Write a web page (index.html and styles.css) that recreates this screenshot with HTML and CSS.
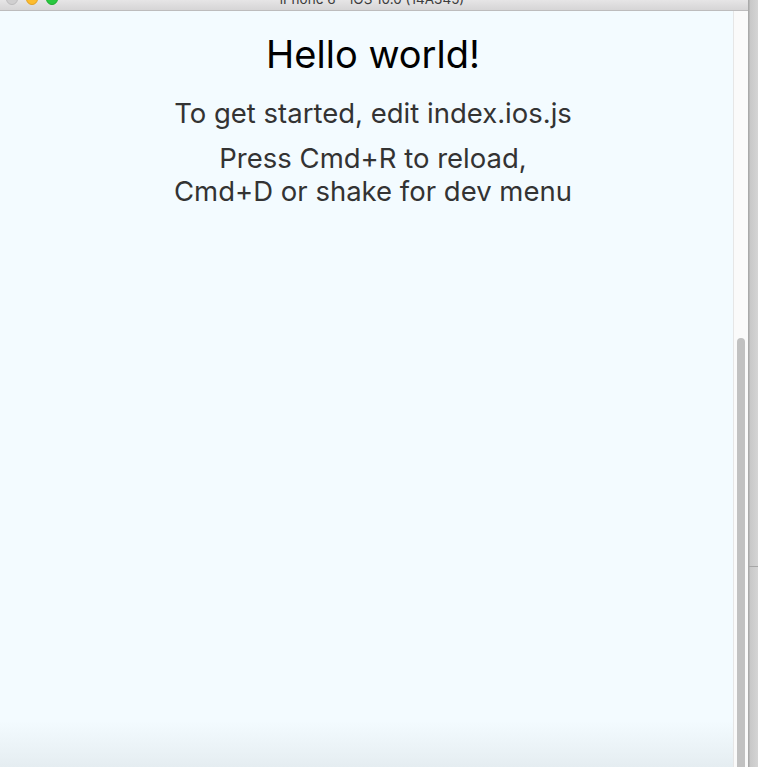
FILE: index.html
```html
<!DOCTYPE html>
<html>
<head>
<meta charset="utf-8">
<link rel="stylesheet" href="styles.css">
</head>
<body>
<div class="desk">
  <div class="window">
    <div class="titlebar">
      <div class="titlerow">
        <div class="lights">
          <span class="light gray"></span>
          <span class="light yellow"></span>
          <span class="light green"></span>
        </div>
        <div class="title">iPhone 6 – iOS 10.0 (14A345)</div>
      </div>
    </div>
    <div class="body">
      <div class="screen">
        <h1 class="welcome">Hello world!</h1>
        <p class="instructions first">To get started, edit index.ios.js</p>
        <p class="instructions">Press Cmd+R to reload,<br>Cmd+D or shake for dev menu</p>
      </div>
      <div class="scrollbar"><div class="thumb"></div></div>
    </div>
  </div>
  <div class="strip"><div class="stripline"></div></div>
</div>
</body>
</html>
```
FILE: styles.css
```css
html, body {
  margin: 0;
  padding: 0;
  width: 758px;
  height: 767px;
  overflow: hidden;
}
.desk {
  display: flex;
  width: 758px;
  height: 767px;
  font-family: Inter, "Liberation Sans", sans-serif;
}
.window {
  width: 748px;
  height: 767px;
  display: flex;
  flex-direction: column;
}
.titlebar {
  height: 10px;
  flex: none;
  overflow: hidden;
  background: linear-gradient(#e6e5e6, #d6d5d6);
  border-bottom: 1px solid #bdbcbd;
}
.titlerow {
  height: 22px;
  margin-top: -12px;
  display: flex;
  align-items: center;
  position: relative;
}
.lights {
  display: flex;
  gap: 8px;
  padding-left: 6px;
}
.light {
  width: 12px;
  height: 12px;
  border-radius: 50%;
  box-sizing: border-box;
}
.gray { background: #d0cfd0; border: 1px solid #bdbcbd; }
.yellow { background: #fdbc2e; border: 1px solid #e0a125; }
.green { background: #28c840; border: 1px solid #1eab2e; }
.title {
  position: absolute;
  left: 0;
  right: 0;
  top: 3px;
  text-align: center;
  font-size: 13.5px;
  line-height: 16px;
  color: #3c3c3c;
  padding-right: 4px;
}
.body {
  flex: 1;
  position: relative;
  background: linear-gradient(#f3fbff 0, #f3fbff 710px, #e5edf1 756px);
  overflow: hidden;
}
.screen {
  width: 746px;
  text-align: center;
  padding-top: 20px;
}
.welcome {
  margin: 0;
  font-weight: 400;
  font-size: 38px;
  line-height: 46px;
  color: #000;
}
.instructions {
  margin: 12px 0 0;
  font-size: 27.5px;
  line-height: 33px;
  color: #333;
}
.instructions.first {
  margin-top: 20px;
}
.scrollbar {
  position: absolute;
  top: 0;
  right: 0;
  bottom: 0;
  width: 14px;
  background: #fafafa;
  border-left: 1px solid #e6e6e6;
}
.thumb {
  position: absolute;
  left: 3px;
  width: 8px;
  top: 327px;
  bottom: 0;
  background: #c1c1c1;
  border-radius: 4px 4px 0 0;
}
.strip {
  width: 10px;
  height: 767px;
  background: linear-gradient(90deg, #a9a9a9 0, #a9a9a9 1px, #c8c8c8 2px, #d4d4d4 10px);
  position: relative;
}
.stripline {
  position: absolute;
  left: 1px;
  right: 0;
  top: 566px;
  height: 1px;
  background: #a6a6a6;
}
```
